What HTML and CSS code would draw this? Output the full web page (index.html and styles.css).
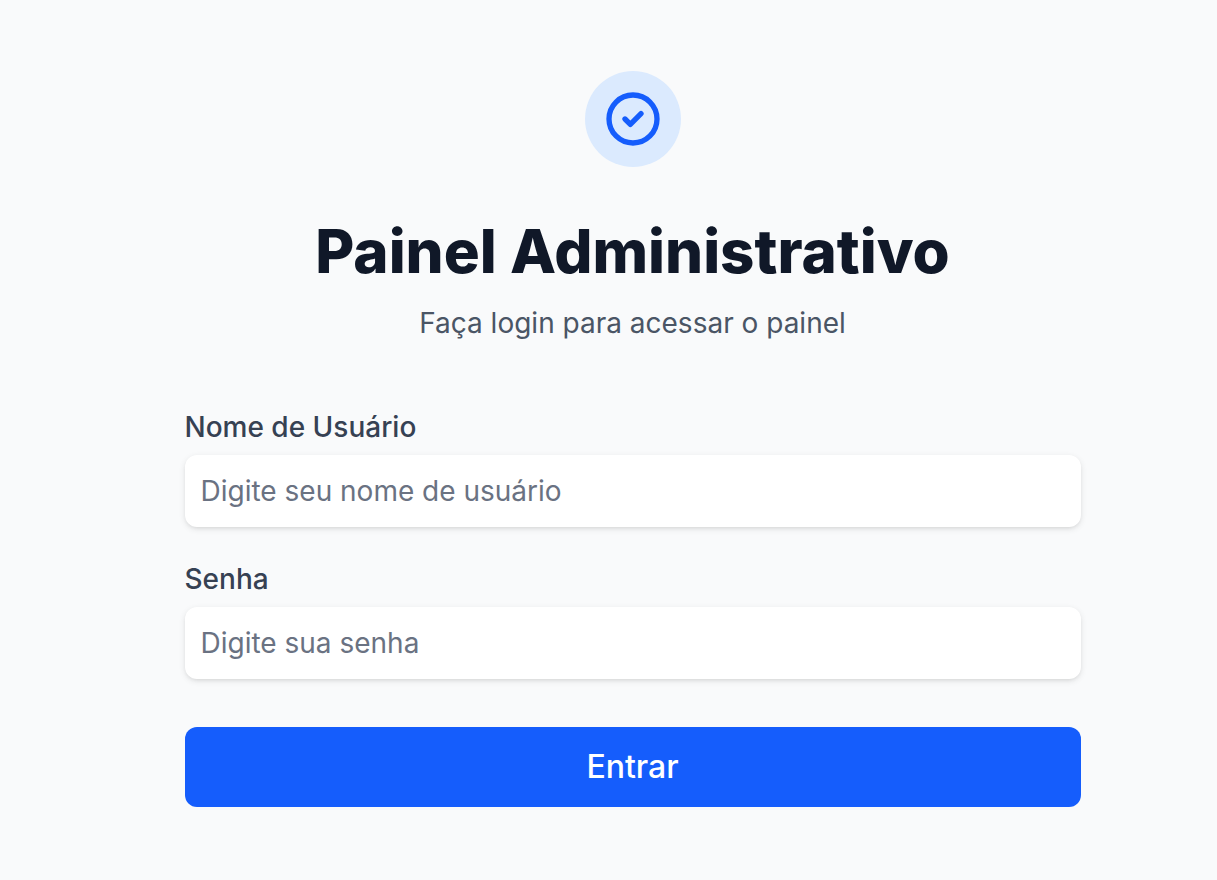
FILE: index.html
```html
<!DOCTYPE html>
<html lang="pt-BR">
<head>
<meta charset="utf-8">
<meta name="viewport" content="width=device-width, initial-scale=1">
<title>Painel Administrativo</title>
<link rel="stylesheet" href="styles.css">
</head>
<body>
<main class="login">
  <header class="intro">
    <div class="badge">
      <svg class="badge-icon" viewBox="0 0 24 24" fill="none" stroke="currentColor" stroke-width="2" stroke-linecap="round" stroke-linejoin="round" aria-hidden="true">
        <path d="M9 12l2 2 4-4m6 2a9 9 0 11-18 0 9 9 0 0118 0z"/>
      </svg>
    </div>
    <h1 class="title">Painel Administrativo</h1>
    <p class="subtitle">Faça login para acessar o painel</p>
  </header>
  <form class="form">
    <div class="field">
      <label class="label" for="username">Nome de Usuário</label>
      <input class="input" id="username" name="username" type="text" placeholder="Digite seu nome de usuário">
    </div>
    <div class="field">
      <label class="label" for="password">Senha</label>
      <input class="input" id="password" name="password" type="password" placeholder="Digite sua senha">
    </div>
    <button class="submit" type="submit">Entrar</button>
  </form>
</main>
</body>
</html>
```
FILE: styles.css
```css
* {
  box-sizing: border-box;
}

body {
  margin: 0;
  min-height: 100vh;
  padding: 71px 24px 72px 72px;
  background: #f9fafb;
  color: #101828;
  font-family: Inter, "Liberation Sans", sans-serif;
}

.login {
  max-width: 896px;
  margin: 0 auto;
}

.intro {
  display: flex;
  flex-direction: column;
  align-items: center;
  text-align: center;
}

.badge {
  display: flex;
  align-items: center;
  justify-content: center;
  width: 96px;
  height: 96px;
  border-radius: 50%;
  background: #dbeafe;
  color: #155dfc;
}

.badge-icon {
  width: 64px;
  height: 64px;
}

.title {
  margin: 48px 0 0;
  font-size: 60px;
  font-weight: 800;
  line-height: 72px;
}

.subtitle {
  margin: 16px 0 0;
  color: #4a5565;
  font-size: 28px;
  line-height: 40px;
}

.form {
  display: flex;
  flex-direction: column;
  gap: 32px;
  margin-top: 64px;
}

.field {
  display: flex;
  flex-direction: column;
  gap: 8px;
}

.label {
  color: #364153;
  font-size: 28px;
  font-weight: 500;
  line-height: 40px;
}

.input {
  width: 100%;
  height: 72px;
  padding: 16px;
  border: 0;
  border-radius: 12px;
  background: #fff;
  box-shadow: 0 2px 6px rgba(0, 0, 0, 0.1), 0 2px 4px -2px rgba(0, 0, 0, 0.1);
  color: #101828;
  font: inherit;
  font-size: 28px;
  line-height: 40px;
}

.input::placeholder {
  color: #6a7282;
}

.submit {
  height: 80px;
  margin-top: 16px;
  border: 0;
  border-radius: 12px;
  background: #155dfc;
  color: #fff;
  font: inherit;
  font-size: 32px;
  font-weight: 500;
  line-height: 48px;
  cursor: pointer;
}
```
